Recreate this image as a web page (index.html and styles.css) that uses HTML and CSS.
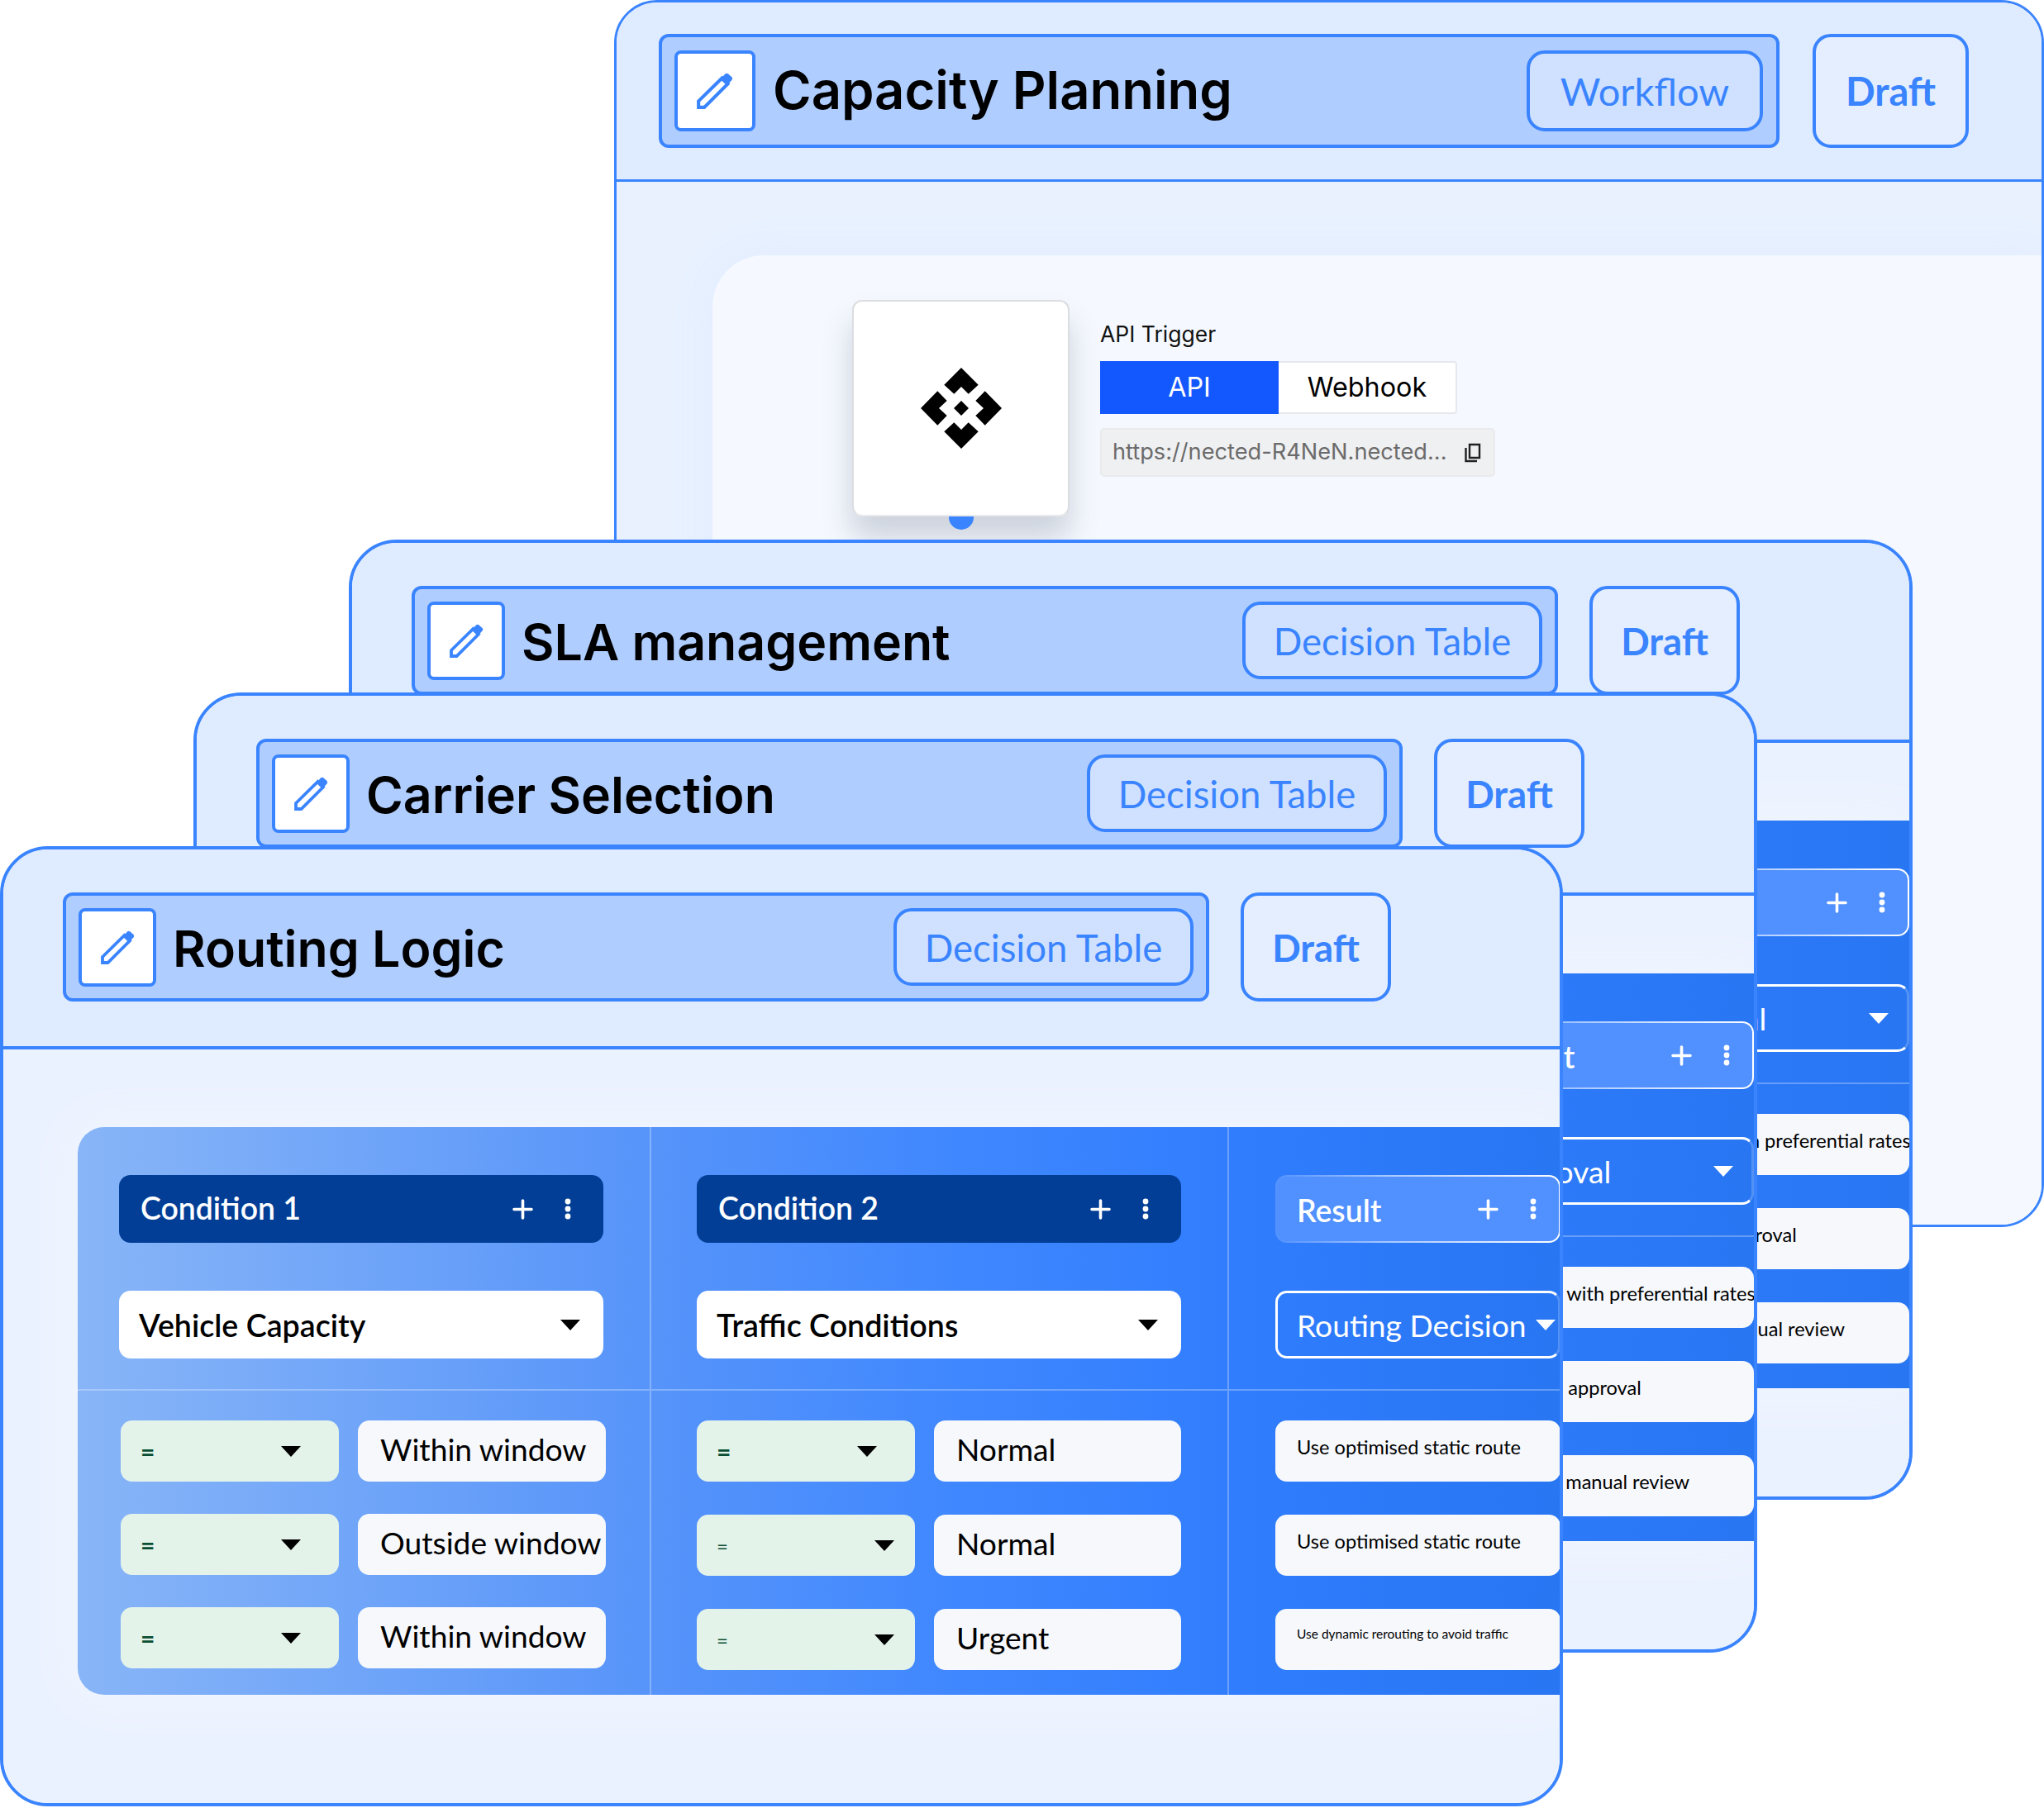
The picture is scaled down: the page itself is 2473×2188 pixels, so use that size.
FILE: index.html
```html
<!DOCTYPE html>
<html lang="en">
<head>
<meta charset="utf-8">
<title>Rule editor cards</title>
<link rel="stylesheet" href="styles.css">
</head>
<body>
<svg class="defs" aria-hidden="true">
  <symbol id="pencil" viewBox="0 0 41 41">
    <path d="M2 32 L28.5 6 L35 12.5 L8.5 39 L2 39 Z" fill="none" stroke="#3a84ff" stroke-width="3.8"/>
    <path d="M26.5 7.5 L32 1.5 Q33.7 0 35.5 1.5 L39.5 5 Q41 6.5 39.5 8.5 L34 14.5 Z" fill="#3a84ff"/>
  </symbol>
  <symbol id="plus" viewBox="0 0 25 25">
    <path d="M12.5 2 V23 M2 12.5 H23" fill="none" stroke="#fff" stroke-width="3.6" stroke-linecap="round"/>
  </symbol>
  <symbol id="dots" viewBox="0 0 8 26">
    <circle cx="4" cy="4" r="3.4" fill="#fff"/><circle cx="4" cy="13" r="3.4" fill="#fff"/><circle cx="4" cy="22" r="3.4" fill="#fff"/>
  </symbol>
</svg>

<main class="canvas">
  <section class="card card-workflow">
    <header class="head head-wide">
      <div class="bar bar-wide">
        <span class="edit edit-wide"><svg class="pencil pencil-wide"><use href="#pencil"/></svg></span>
        <h2 class="title title-wide">Capacity Planning</h2>
        <span class="pill pill-wide">Workflow</span>
      </div>
      <span class="draft draft-wide">Draft</span>
    </header>
    <div class="panel-wrap">
      <div class="panel">
        <div class="node">
          <svg class="logo" viewBox="-50 -50 100 100">
            <path d="M0 -49 L20.7 -28.3 L8.7 -17.3 L0 -26 L-8.7 -17.3 L-20.7 -28.3 Z"/>
            <path d="M0 49 L20.7 28.3 L8.7 17.3 L0 26 L-8.7 17.3 L-20.7 28.3 Z"/>
            <path d="M-49 0 L-28.7 -20.7 L-17.3 -9 L-27 0 L-17.3 9 L-28.7 20.7 Z"/>
            <path d="M49 0 L28.7 -20.7 L17.3 -9 L27 0 L17.3 9 L28.7 20.7 Z"/>
            <path d="M0 -9 L9 0 L0 9 L-9 0 Z"/>
          </svg>
          <span class="node-dot"></span>
        </div>
        <div class="trigger">
          <div class="trigger-label">API Trigger</div>
          <div class="toggle">
            <span class="toggle-on">API</span>
            <span class="toggle-off">Webhook</span>
          </div>
          <div class="url">
            <span class="url-text">https://nected-R4NeN.nected...</span>
            <svg class="copy" viewBox="0 0 20 24"><path d="M6 2 H18 V18 H6 Z M1.5 6 V22 H15" fill="none" stroke="#222" stroke-width="2.4"/></svg>
          </div>
        </div>
      </div>
    </div>
  </section>

  <section class="card card-sla">
    <header class="head">
      <div class="bar">
        <span class="edit"><svg class="pencil"><use href="#pencil"/></svg></span>
        <h2 class="title">SLA management</h2>
        <span class="pill">Decision Table</span>
      </div>
      <span class="draft">Draft</span>
    </header>
    <div class="body">
      <div class="table">
        <div class="col col-a"><div class="col-head"></div><div class="col-body"></div></div>
        <div class="col col-b"><div class="col-head"></div><div class="col-body"></div></div>
        <div class="col col-c">
          <div class="col-head">
            <div class="chip chip-result"><span>Result</span><svg class="plus"><use href="#plus"/></svg><svg class="dots"><use href="#dots"/></svg></div>
            <div class="select select-result select-short"><span>Approval</span><i class="arrow arrow-white"></i></div>
          </div>
          <div class="col-body rows-wide">
            <div class="result">Provider with preferential rates</div>
            <div class="result">Regional approval</div>
            <div class="result">Hold for manual review</div>
          </div>
        </div>
      </div>
    </div>
  </section>

  <section class="card card-carrier">
    <header class="head">
      <div class="bar">
        <span class="edit"><svg class="pencil"><use href="#pencil"/></svg></span>
        <h2 class="title">Carrier Selection</h2>
        <span class="pill">Decision Table</span>
      </div>
      <span class="draft">Draft</span>
    </header>
    <div class="body">
      <div class="table">
        <div class="col col-a"><div class="col-head"></div><div class="col-body"></div></div>
        <div class="col col-b"><div class="col-head"></div><div class="col-body"></div></div>
        <div class="col col-c">
          <div class="col-head">
            <div class="chip chip-result"><span>Result</span><svg class="plus"><use href="#plus"/></svg><svg class="dots"><use href="#dots"/></svg></div>
            <div class="select select-result select-short"><span>Approval</span><i class="arrow arrow-white"></i></div>
          </div>
          <div class="col-body rows-wide">
            <div class="result">Provider with preferential rates</div>
            <div class="result">Regional approval</div>
            <div class="result">Hold for manual review</div>
          </div>
        </div>
      </div>
    </div>
  </section>

  <section class="card card-routing">
    <header class="head">
      <div class="bar">
        <span class="edit"><svg class="pencil"><use href="#pencil"/></svg></span>
        <h2 class="title">Routing Logic</h2>
        <span class="pill">Decision Table</span>
      </div>
      <span class="draft">Draft</span>
    </header>
    <div class="body">
      <div class="table">
        <div class="col col-a">
          <div class="col-head">
            <div class="chip"><span>Condition 1</span><svg class="plus"><use href="#plus"/></svg><svg class="dots"><use href="#dots"/></svg></div>
            <div class="select"><span>Vehicle Capacity</span><i class="arrow"></i></div>
          </div>
          <div class="col-body rows-a">
            <div class="row"><div class="op"><span>=</span><i class="arrow"></i></div><div class="value">Within window</div></div>
            <div class="row"><div class="op"><span>=</span><i class="arrow"></i></div><div class="value">Outside window</div></div>
            <div class="row"><div class="op"><span>=</span><i class="arrow"></i></div><div class="value">Within window</div></div>
          </div>
        </div>
        <div class="col col-b">
          <div class="col-head">
            <div class="chip"><span>Condition 2</span><svg class="plus"><use href="#plus"/></svg><svg class="dots"><use href="#dots"/></svg></div>
            <div class="select"><span>Traffic Conditions</span><i class="arrow"></i></div>
          </div>
          <div class="col-body rows-b">
            <div class="row"><div class="op"><span>=</span><i class="arrow"></i></div><div class="value">Normal</div></div>
            <div class="row"><div class="op op-small"><span>=</span><i class="arrow"></i></div><div class="value">Normal</div></div>
            <div class="row"><div class="op op-small"><span>=</span><i class="arrow"></i></div><div class="value">Urgent</div></div>
          </div>
        </div>
        <div class="col col-c">
          <div class="col-head">
            <div class="chip chip-result"><span>Result</span><svg class="plus"><use href="#plus"/></svg><svg class="dots"><use href="#dots"/></svg></div>
            <div class="select select-result"><span>Routing Decision</span><i class="arrow arrow-white"></i></div>
          </div>
          <div class="col-body rows-wide">
            <div class="result">Use optimised static route</div>
            <div class="result">Use optimised static route</div>
            <div class="result result-tiny">Use dynamic rerouting to avoid traffic</div>
          </div>
        </div>
      </div>
    </div>
  </section>
</main>
</body>
</html>
```
FILE: styles.css
```css
* { box-sizing: border-box; }
html, body { margin: 0; padding: 0; background: #fff; }
.defs { position: absolute; width: 0; height: 0; }
.canvas { position: relative; width: 2473px; height: 2188px; overflow: hidden; background: #fff; font-family: "Lato", "Liberation Sans", sans-serif; }

/* Windows on the free canvas */
.card { position: absolute; width: 1892px; height: 1162px; display: flex; flex-direction: column; border: 4px solid #3a84ff; border-radius: 58px; overflow: hidden; background: #ebf2ff; }
.card-workflow { left: 743px; top: 0; width: 1730px; height: 1485px; border-width: 3px; border-radius: 52px; background: #e9f1ff; }
.card-sla { left: 422px; top: 653px; }
.card-carrier { left: 234px; top: 838px; }
.card-routing { left: 0; top: 1024px; width: 1891px; }

/* Header */
.head { flex: none; display: flex; align-items: flex-start; height: 242px; padding: 52px 0 0 72px; gap: 38px; background: #dfebff; border-bottom: 4px solid #3a84ff; }
.head-wide { height: 217px; padding: 38px 0 0 51px; gap: 40px; border-bottom-width: 3px; }
.bar { flex: none; display: flex; align-items: center; width: 1387px; height: 132px; padding: 0 15px; border: 4px solid #3a84ff; border-radius: 12px; background: #afcdff; }
.bar-wide { width: 1356px; height: 138px; padding: 0 16px 0 15px; }
.edit { flex: none; display: flex; align-items: center; justify-content: center; width: 94px; height: 95px; border: 4px solid #3a84ff; border-radius: 8px; background: #fff; }
.edit-wide { width: 98px; height: 98px; }
.pencil { width: 41px; height: 41px; }
.pencil-wide { width: 44px; height: 44px; }
.title { flex: 1; margin: 4px 0 0 20px; font-family: "Inter", "Liberation Sans", sans-serif; font-size: 60.8px; font-weight: 600; line-height: 1; color: #000; white-space: nowrap; }
.title-wide { font-size: 63.3px; margin-left: 21px; margin-top: 0; }
.pill { flex: none; display: flex; align-items: center; justify-content: center; width: 363px; height: 94px; border: 4px solid #3a84ff; border-radius: 22px; background: #cfe1ff; color: #3a84ff; font-size: 45.5px; white-space: nowrap; }
.pill-wide { width: 286px; height: 98px; font-size: 47px; }
.draft { flex: none; display: flex; align-items: center; justify-content: center; width: 182px; height: 132px; border: 4px solid #3a84ff; border-radius: 22px; background: #e4eeff; color: #3a84ff; font-size: 45.5px; font-weight: 700; }
.draft-wide { width: 189px; height: 138px; font-size: 47px; }

/* Workflow body */
.panel-wrap { flex: 1; display: flex; padding: 89px 0 0 116px; }
.panel { flex: 1; display: flex; align-items: flex-start; gap: 37px; padding: 54px 0 0 169px; border-top-left-radius: 62px; background: #f5f9ff; box-shadow: 0 0 50px #e1ecff; font-family: "Inter", "Liberation Sans", sans-serif; }
.node { position: relative; flex: none; display: flex; align-items: center; justify-content: center; width: 263px; height: 262px; border: 2px solid #dcdde1; border-bottom-color: #e8e9ec; border-radius: 12px; background: #fff; box-shadow: 0 26px 36px rgba(60, 70, 90, .22); }
.logo { width: 100px; height: 100px; fill: #000; }
.node-dot { position: absolute; top: calc(100% + 2px); left: 50%; width: 30px; height: 16px; margin-left: -15px; border-radius: 0 0 15px 15px; background: #3a84ff; }
.trigger { display: flex; flex-direction: column; padding-top: 26px; }
.trigger-label { height: 30px; margin-bottom: 18px; font-size: 26.5px; line-height: 30px; color: #111; }
.toggle { display: flex; width: 432px; height: 64px; margin-bottom: 17px; font-size: 32.3px; }
.toggle-on { flex: none; display: flex; align-items: center; justify-content: center; width: 216px; padding-bottom: 2px; background: #1358ff; color: #fff; }
.toggle-off { flex: 1; display: flex; align-items: center; justify-content: center; padding-bottom: 2px; border: 2px solid #e6e8ec; border-left: 0; border-radius: 0 4px 4px 0; background: #fff; color: #000; }
.url { display: flex; align-items: center; justify-content: space-between; width: 478px; height: 59px; padding: 0 15px 0 13px; border: 2px solid #e9eaec; border-radius: 5px; background: #eff0f2; color: #6b6b6b; font-size: 27.2px; }
.url-text { margin-top: -3px; white-space: nowrap; }
.copy { width: 20px; height: 24px; }

/* Decision table */
.body { flex: 1; padding: 94px 0 0 90px; background: #ebf2ff; }
.table { display: grid; grid-template-columns: 694px 699px 401px; width: 1794px; height: 687px; border-radius: 32px 0 0 32px; overflow: hidden; background: linear-gradient(90deg, #88b5f7 0, #5593fa 40%, #3f87ff 60%, #2f7cfd 80%, #2876f2 100%); box-shadow: 0 0 60px #f2f7ff; }
.col { display: flex; flex-direction: column; min-width: 0; }
.col-a { border-right: 2px solid rgba(255, 255, 255, .28); }
.col-b { border-right: 2px solid rgba(255, 255, 255, .28); }
.col-head { flex: none; display: flex; flex-direction: column; gap: 58px; height: 319px; padding-top: 58px; border-bottom: 2px solid rgba(255, 255, 255, .28); }
.col-a .col-head { padding-left: 50px; }
.col-b .col-head { padding-left: 55px; }
.col-c .col-head { padding-left: 56px; }
.col-body { flex: 1; display: flex; flex-direction: column; padding-top: 36px; }
.rows-a { gap: 39px; padding-left: 52px; }
.rows-b { gap: 40px; padding-left: 55px; }
.rows-wide { gap: 40px; padding-left: 56px; }

.chip { display: flex; align-items: center; width: 586px; height: 82px; padding: 0 39px 0 26px; border-radius: 14px; background: #023e96; color: #fff; font-size: 37.4px; font-weight: 600; }
.chip span { flex: 1; margin-top: -3px; }
.plus { width: 25px; height: 25px; margin-right: 38px; }
.dots { width: 8px; height: 26px; }
.chip-result { width: 345px; padding: 0 27px 0 24px; border: 2px solid transparent; background: linear-gradient(#5090ff, #5090ff) padding-box, linear-gradient(90deg, #5492ff 0, #a9c9ff 40%, #fff 100%) border-box; }
.chip-result span { margin-top: 2px; }
.select { display: flex; align-items: center; justify-content: space-between; width: 586px; height: 82px; padding: 0 28px 0 24px; border-radius: 14px; background: #fff; color: #000; font-size: 37.6px; font-weight: 600; white-space: nowrap; }
.select-result { width: 345px; padding: 0 3px 0 23px; border: 3px solid #fff; border-right-color: rgba(255, 255, 255, .2); background: transparent; color: #fff; font-size: 37.2px; font-weight: 400; }
.select-short { padding-right: 22px; }
.arrow { flex: none; width: 0; height: 0; border-left: 12px solid transparent; border-right: 12px solid transparent; border-top: 13px solid #000; }
.arrow-white { border-top-color: #fff; }

.row { display: flex; gap: 23px; height: 74px; }
.op { flex: none; display: flex; align-items: center; justify-content: space-between; width: 264px; padding: 0 46px 0 24px; border-radius: 14px; background: #e4f3ea; color: #0b4f33; font-size: 30px; font-weight: 700; }
.op-small { padding-right: 25px; font-size: 24px; font-weight: 400; }
.value { flex: none; display: flex; align-items: center; width: 300px; padding: 0 0 5px 27px; border-radius: 14px; background: #f6f8fc; color: #000; font-size: 37.2px; white-space: nowrap; }
.rows-b .value { width: 299px; }
.result { display: flex; align-items: flex-start; width: 345px; height: 74px; padding: 17px 0 0 26px; border-radius: 14px; background: #f6f8fc; color: #000; font-size: 23.6px; line-height: 30px; white-space: nowrap; overflow: hidden; }
.result-tiny { font-size: 15.5px; padding-top: 18px; line-height: 24px; }
```
